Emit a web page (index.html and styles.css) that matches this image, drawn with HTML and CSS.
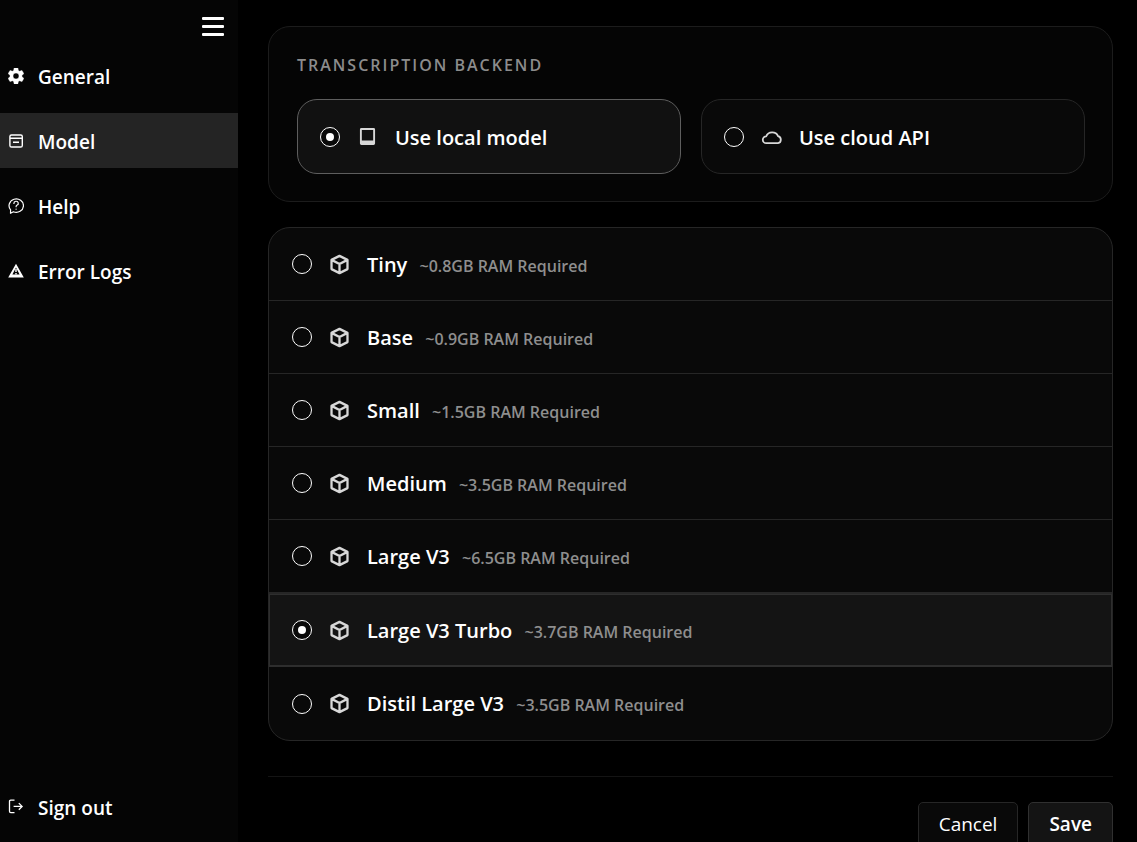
FILE: index.html
```html
<!DOCTYPE html>
<html lang="en">
<head>
    <meta charset="UTF-8">
    <meta name="viewport" content="width=device-width, initial-scale=1.0">
    <title>Settings - Model</title>
    <link rel="stylesheet" href="styles.css">
</head>
<body>
    <!-- Shared icons -->
    <svg class="sprite" aria-hidden="true">
        <symbol id="icon-cube" viewBox="0 0 20 20">
            <path d="M10 1.8 L17.6 5.6 V14.4 L10 18.2 L2.4 14.4 V5.6 Z M2.4 5.6 L10 9.6 L17.6 5.6 M10 9.6 V18.2" fill="none" stroke="currentColor" stroke-width="2.2" stroke-linejoin="round"/>
        </symbol>
    </svg>

    <aside class="sidebar">
        <div class="sidebar-top">
            <button class="menu-toggle" type="button" aria-label="Toggle menu">
                <span></span>
                <span></span>
                <span></span>
            </button>
        </div>
        <nav class="nav">
            <a class="nav-item" href="#general">
                <svg class="nav-icon" viewBox="2.4 2.4 19.2 19.2" aria-hidden="true"><path fill="currentColor" stroke="currentColor" stroke-width=".5" d="M19.14 12.94c.04-.3.06-.61.06-.94s-.02-.64-.07-.94l2.03-1.58a.49.49 0 0 0 .12-.61l-1.92-3.32a.49.49 0 0 0-.59-.22l-2.39.96a7 7 0 0 0-1.62-.94l-.36-2.54a.48.48 0 0 0-.48-.41h-3.84a.48.48 0 0 0-.47.41l-.36 2.54c-.59.24-1.13.57-1.62.94l-2.39-.96a.48.48 0 0 0-.59.22L2.74 8.87a.48.48 0 0 0 .12.61l2.03 1.58c-.05.3-.09.63-.09.94s.02.64.07.94l-2.03 1.58a.49.49 0 0 0-.12.61l1.92 3.32c.12.22.37.29.59.22l2.39-.96c.5.38 1.03.7 1.62.94l.36 2.54c.05.24.24.41.48.41h3.84c.24 0 .44-.17.47-.41l.36-2.54a7 7 0 0 0 1.62-.94l2.39.96c.22.08.47 0 .59-.22l1.92-3.32a.48.48 0 0 0-.12-.61zM12 15.6a3.6 3.6 0 1 1 0-7.2 3.6 3.6 0 0 1 0 7.2z"/></svg>
                <span class="nav-label">General</span>
            </a>
            <a class="nav-item active" href="#model">
                <svg class="nav-icon" viewBox="0 0 16 16" aria-hidden="true"><g fill="none" stroke="currentColor" stroke-width="1.4"><rect x="1.9" y="2" width="12.4" height="12" rx="1.6"/><path d="M2 5.3h12.2M5 9.2h6"/></g></svg>
                <span class="nav-label">Model</span>
            </a>
            <a class="nav-item" href="#help">
                <svg class="nav-icon" viewBox="0 0 16 16" aria-hidden="true"><g fill="none" stroke="currentColor" stroke-width="1.2" stroke-linecap="round" stroke-linejoin="round"><path d="M2.6 11.8A7.2 6.7 0 1 1 5.4 13.8L2.5 15.3Z"/><path d="M5.9 5.4A2.2 2.1 0 1 1 8.9 7.3C8.3 7.6 8.1 8 8.1 8.7M8.1 11v.2"/></g></svg>
                <span class="nav-label">Help</span>
            </a>
            <a class="nav-item" href="#logs">
                <svg class="nav-icon" viewBox="0 0 16 16" aria-hidden="true"><path fill="currentColor" fill-rule="evenodd" d="M8 .8L15.8 14.6H.2zM8 4.6L4.4 11.6H11.6z"/><path stroke="currentColor" stroke-width="1.4" d="M8 6v3M8 10v1.6"/></svg>
                <span class="nav-label">Error Logs</span>
            </a>
        </nav>
        <a class="nav-item sign-out" href="#signout">
            <svg class="nav-icon" viewBox="0 0 16 16" aria-hidden="true"><path fill="none" stroke="currentColor" stroke-width="1.3" d="M6.5 1.2H2.8Q1.5 1.2 1.5 2.5V12.3Q1.5 13.6 2.8 13.6H6.5M5.6 7.4H14M10.8 4.1L14.1 7.4L10.8 10.7"/></svg>
            <span class="nav-label">Sign out</span>
        </a>
    </aside>

    <main class="content">
        <section class="panel">
            <h2 class="panel-title" id="backend-title">Transcription Backend</h2>
            <div class="options" role="radiogroup" aria-labelledby="backend-title">
                <label class="option">
                    <input class="radio" type="radio" name="backend" value="local" checked>
                    <svg class="icon" viewBox="0 0 20 20" aria-hidden="true"><path d="M4.2 2H15.8Q17.2 2 17.2 3.4V16.6Q17.2 18 15.8 18H4.2Q2.8 18 2.8 16.6V3.4Q2.8 2 4.2 2ZM4.6 3.7V13.9H15.4V3.7Z" fill="currentColor" fill-rule="evenodd"/></svg>
                    <span class="name">Use local model</span>
                </label>
                <label class="option">
                    <input class="radio" type="radio" name="backend" value="cloud">
                    <svg class="icon" viewBox="0 0 20 20" aria-hidden="true"><path d="M5 16.4A3.3 3.3 0 0 1 5 9.8A6 5.6 0 0 1 16.2 9.6A3.5 3.5 0 0 1 16.2 16.4Z" fill="none" stroke="currentColor" stroke-width="1.7" stroke-linejoin="round"/></svg>
                    <span class="name">Use cloud API</span>
                </label>
            </div>
        </section>

        <section class="models" role="radiogroup" aria-label="Local model">
            <label class="model">
                <input class="radio" type="radio" name="model" value="tiny">
                <svg class="icon" aria-hidden="true"><use href="#icon-cube"/></svg>
                <span class="name">Tiny <small class="ram">~0.8GB RAM Required</small></span>
            </label>
            <label class="model">
                <input class="radio" type="radio" name="model" value="base">
                <svg class="icon" aria-hidden="true"><use href="#icon-cube"/></svg>
                <span class="name">Base <small class="ram">~0.9GB RAM Required</small></span>
            </label>
            <label class="model">
                <input class="radio" type="radio" name="model" value="small">
                <svg class="icon" aria-hidden="true"><use href="#icon-cube"/></svg>
                <span class="name">Small <small class="ram">~1.5GB RAM Required</small></span>
            </label>
            <label class="model">
                <input class="radio" type="radio" name="model" value="medium">
                <svg class="icon" aria-hidden="true"><use href="#icon-cube"/></svg>
                <span class="name">Medium <small class="ram">~3.5GB RAM Required</small></span>
            </label>
            <label class="model">
                <input class="radio" type="radio" name="model" value="large-v3">
                <svg class="icon" aria-hidden="true"><use href="#icon-cube"/></svg>
                <span class="name">Large V3 <small class="ram">~6.5GB RAM Required</small></span>
            </label>
            <label class="model">
                <input class="radio" type="radio" name="model" value="large-v3-turbo" checked>
                <svg class="icon" aria-hidden="true"><use href="#icon-cube"/></svg>
                <span class="name">Large V3 Turbo <small class="ram">~3.7GB RAM Required</small></span>
            </label>
            <label class="model">
                <input class="radio" type="radio" name="model" value="distil-large-v3">
                <svg class="icon" aria-hidden="true"><use href="#icon-cube"/></svg>
                <span class="name">Distil Large V3 <small class="ram">~3.5GB RAM Required</small></span>
            </label>
        </section>

        <footer class="actions">
            <button class="btn" type="button">Cancel</button>
            <button class="btn btn-primary" type="submit">Save</button>
        </footer>
    </main>
</body>
</html>
```
FILE: styles.css
```css
* {
    box-sizing: border-box;
}
body {
    font-family: "Open Sans", "Noto Sans", sans-serif;
    background-color: #000;
    color: #fff;
    margin: 0;
    display: flex;
    height: 100vh;
    overflow: hidden;
}
.sprite {
    display: none;
}

/* Sidebar */
.sidebar {
    width: 238px;
    flex-shrink: 0;
    background-color: #050505;
    display: flex;
    flex-direction: column;
    padding-bottom: 8px;
}
.sidebar-top {
    display: flex;
    justify-content: flex-end;
    padding: 12px 12px 7px;
}
.menu-toggle {
    display: flex;
    flex-direction: column;
    justify-content: center;
    gap: 5px;
    width: 26px;
    height: 29px;
    padding: 0 2px;
    background: none;
    border: none;
    cursor: pointer;
}
.menu-toggle span {
    height: 3px;
    border-radius: 1px;
    background-color: #fff;
}
.nav {
    display: flex;
    flex-direction: column;
    gap: 10px;
}
.nav-item {
    display: flex;
    align-items: center;
    gap: 14px;
    height: 55px;
    padding: 0 8px;
    color: #fff;
    font-size: 19px;
    font-weight: 600;
    text-decoration: none;
}
.nav-item.active,
.nav-item:hover {
    background-color: #242424;
}
.nav-icon {
    width: 16px;
    height: 16px;
}
.nav-label {
    padding-top: 2px;
}
.sign-out {
    margin-top: auto;
}

/* Main content */
.content {
    flex: 1;
    min-width: 0;
    padding: 26px 24px 26px 30px;
    overflow-y: auto;
    scrollbar-width: none;
}
.panel {
    background-color: #050505;
    border: 1px solid #1c1c1c;
    border-radius: 22px;
    padding: 28px 27px 27px 28px;
}
.panel-title {
    margin: 0 0 24px;
    color: #8c8c8c;
    font-size: 16px;
    font-weight: 600;
    line-height: 20px;
    letter-spacing: 2px;
    text-transform: uppercase;
}
.options {
    display: grid;
    grid-template-columns: 1fr 1fr;
    gap: 20px;
}
.option {
    display: flex;
    align-items: center;
    gap: 17px;
    height: 75px;
    padding: 0 22px;
    background-color: #090909;
    border: 1px solid #262626;
    border-radius: 20px;
    cursor: pointer;
}
.option:has(:checked) {
    background-color: #111;
    border-color: #5e5e5e;
}
.radio {
    appearance: none;
    display: grid;
    place-items: center;
    flex-shrink: 0;
    width: 20px;
    height: 20px;
    margin: 0;
    background-color: #090909;
    border: 1px solid #fff;
    border-radius: 50%;
    cursor: pointer;
}
.radio:checked::before {
    content: "";
    width: 8px;
    height: 8px;
    border-radius: 50%;
    background-color: #fff;
}
.icon {
    width: 21px;
    height: 21px;
    flex-shrink: 0;
    color: #d8d8d8;
}
.name {
    padding-top: 2px;
    font-size: 20px;
    font-weight: 600;
    line-height: 28px;
}
.models {
    margin-top: 25px;
    background-color: #090909;
    border: 1px solid #262626;
    border-radius: 22px;
    overflow: hidden;
}
.model {
    display: flex;
    align-items: center;
    gap: 17px;
    height: 73px;
    padding: 0 23px;
    border-bottom: 1px solid #262626;
    cursor: pointer;
}
.model:last-child {
    border-bottom: none;
}
.model:has(:checked) {
    height: 74px;
    background-color: #141414;
    border-top: 1px solid #262626;
    border-bottom-color: #2e2e2e;
    box-shadow: inset 0 0 0 1px #2e2e2e;
}
.ram {
    margin-left: 7px;
    color: #8e8e8e;
    font-size: 16px;
    font-weight: 600;
}

/* Footer buttons */
.actions {
    display: flex;
    justify-content: flex-end;
    gap: 10px;
    margin-top: 35px;
    padding-top: 25px;
    border-top: 1px solid #141414;
}
.btn {
    height: 44px;
    padding: 0 20px;
    background-color: #090909;
    border: 1px solid #262626;
    border-radius: 5px;
    color: #fff;
    font-family: inherit;
    font-size: 19px;
    cursor: pointer;
}
.btn-primary {
    background-color: #141414;
    border-color: #303030;
    font-weight: 600;
}
```
